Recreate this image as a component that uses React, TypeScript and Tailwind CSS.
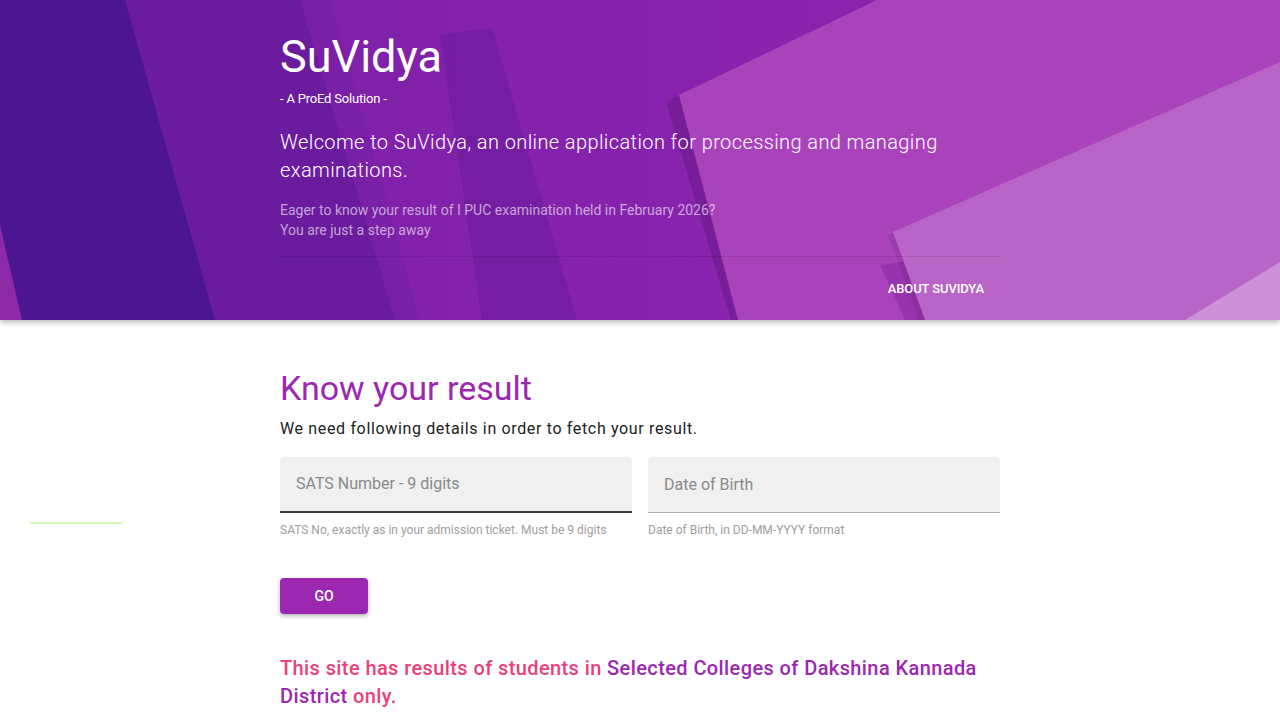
import React from 'react';

const HeaderArt: React.FC = () => (
  <svg className="absolute inset-0 w-full h-full" viewBox="0 0 1280 320" preserveAspectRatio="none">
    <defs>
      <linearGradient id="base" x1="0" y1="0" x2="1" y2="0">
        <stop offset="0" stopColor="#7a1fa8" />
        <stop offset="1" stopColor="#9227b0" />
      </linearGradient>
    </defs>
    <rect width="1280" height="320" fill="url(#base)" />
    <polygon points="125,0 300,0 395,320 215,320" fill="#6a1b9e" />
    <polygon points="0,0 125,0 215,320 0,320" fill="#4b168f" />
    <polygon points="0,225 0,320 22,320" fill="#8c2aa8" />
    <polygon points="300,0 330,0 420,320 395,320" fill="#7420a4" opacity="0.6" />
    <polygon points="440,35 492,28 577,320 482,320" fill="#6f1c9e" opacity="0.7" />
    <polygon points="672,98 877,0 1280,0 1280,320 738,320" fill="#000" opacity="0.12" transform="translate(-6,4)" />
    <polygon points="679,95 877,0 1280,0 1280,320 738,320" fill="#a943bc" />
    <polygon points="880,265 930,258 950,320 905,320" fill="#8e2aa6" opacity="0.6" />
    <polygon points="893,232 1280,62 1280,320 925,320" fill="#000" opacity="0.08" transform="translate(-5,3)" />
    <polygon points="893,232 1280,62 1280,320 925,320" fill="#b865c7" />
    <polygon points="1185,320 1280,262 1280,320" fill="#cd91d9" />
  </svg>
);

const App: React.FC = () => {
  return (
    <div className="min-h-screen bg-white" style={{ fontFamily: 'Roboto, "Noto Sans", sans-serif' }}>
      {/* Header */}
      <header className="relative h-[320px] overflow-hidden shadow-[0_2px_6px_rgba(0,0,0,0.3)] z-10">
        <HeaderArt />
        <div className="relative w-[720px] mx-auto pt-[27px] text-white">
          <h1 className="text-[45px] leading-[60px] font-normal">SuVidya</h1>
          <div className="text-[13px] leading-5 mt-[2px] tracking-[-0.2px]">- A ProEd Solution -</div>
          <p className="text-[20px] leading-[28px] font-light mt-[19px] tracking-[0.4px]">
            Welcome to SuVidya, an online application for processing and managing examinations.
          </p>
          <p className="text-[14px] leading-5 text-white/60 mt-[16px]">
            Eager to know your result of I PUC examination held in February 2026?
            <br />
            You are just a step away
          </p>
          <div className="border-t border-black/10 mt-[16px]" />
          <div className="flex justify-end pt-[14px]">
            <button className="h-9 px-4 text-[13px] font-medium uppercase tracking-[-0.1px] rounded">About SuVidya</button>
          </div>
        </div>
      </header>

      {/* Body */}
      <main className="relative w-[720px] mx-auto pt-[48px]">
        <h2 className="text-[34px] leading-[40px] text-[#9c27b0] font-normal">Know your result</h2>
        <p className="text-[16px] leading-6 text-[#212121] tracking-[0.65px] mt-[9px]">
          We need following details in order to fetch your result.
        </p>
        <div className="flex gap-4 mt-[16px]">
          <div className="flex-1">
            <div className="h-[56px] bg-[#f0f0f0] rounded-t border-b-2 border-[#3a3a3a] flex items-center px-4">
              <span className="text-[16px] text-[#8a8a8a]">SATS Number - 9 digits</span>
            </div>
            <div className="text-[12px] leading-4 text-[#9e9e9e] mt-[9px]">
              SATS No, exactly as in your admission ticket. Must be 9 digits
            </div>
          </div>
          <div className="flex-1">
            <div className="h-[56px] bg-[#f0f0f0] rounded-t border-b border-[#b0b0b0] flex items-center px-4">
              <span className="text-[16px] text-[#8a8a8a]">Date of Birth</span>
            </div>
            <div className="text-[12px] leading-4 text-[#9e9e9e] mt-[9px]">Date of Birth, in DD-MM-YYYY format</div>
          </div>
        </div>
        <button className="mt-[40px] w-[88px] h-9 bg-[#9c27b0] text-white text-[14px] font-medium uppercase rounded shadow-[0_2px_4px_rgba(0,0,0,0.3)]">
          Go
        </button>
        <p className="mt-[40px] text-[20px] leading-[28px] font-medium text-[#ec407a] tracking-[0.4px]">
          This site has results of students in{' '}
          <span className="text-[#9c27b0]">Selected Colleges of Dakshina Kannada District</span> only.
        </p>
      </main>

      <div className="absolute left-[30px] top-[522px] w-[92px] h-[2px] bg-[#d4f7b4]" />
    </div>
  );
};

export default App;
